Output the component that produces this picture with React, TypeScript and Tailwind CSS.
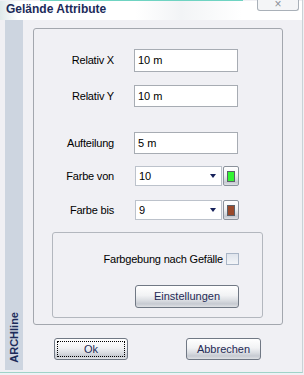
import React from "react";

const BTN_BG =
  "bg-[linear-gradient(to_bottom,#ffffff_0%,#f1f2f4_45%,#d9dce1_70%,#c6cad1_85%,#dfe1e5_100%)]";

function TextField({ value }: { value: string }) {
  return (
    <div className="w-[104px] h-full bg-white border border-[#a7acb3] flex items-center pl-[3px] text-black">
      {value}
    </div>
  );
}

function ColorCombo({ value, color }: { value: string; color: string }) {
  return (
    <div className="flex h-full items-stretch ml-[1px]">
      <div className="w-[87px] bg-white border border-[#bcc2cb] flex items-center justify-between pl-[3px] pr-[5px]">
        <span>{value}</span>
        <svg width="6" height="4" viewBox="0 0 6 4">
          <path d="M0 0h6L3 4z" fill="#16215a" />
        </svg>
      </div>
      <div
        className={`ml-[1px] w-[16px] rounded-[2px] border border-[#8b929c] flex items-center justify-center ${BTN_BG}`}
      >
        <div className="w-[8px] h-[11px] border border-[#5b6068]" style={{ backgroundColor: color }} />
      </div>
    </div>
  );
}

function Row({ label, className, children }: { label: string; className: string; children: React.ReactNode }) {
  return (
    <div className={`flex items-center ${className}`}>
      <div className="w-[80px] text-right tracking-[-0.2px]">{label}</div>
      <div className="ml-[20px] h-full flex">{children}</div>
    </div>
  );
}

function Button({ label, focused, className }: { label: string; focused?: boolean; className?: string }) {
  return (
    <div
      className={`relative h-[22px] rounded-[3px] border border-[#707884] flex items-center justify-center text-[#1f2a55] ${BTN_BG} ${className ?? ""}`}
    >
      {focused && <div className="absolute inset-[2px] border border-dotted border-black" />}
      <span>{label}</span>
    </div>
  );
}

export default function App() {
  return (
    <div className="w-[304px] h-[375px] bg-[#f0f0f4] overflow-hidden text-[11px] text-black font-['Liberation_Sans',Arial,sans-serif]">
      <div className="w-[303px] h-[373px] border-r border-b border-r-[#c9d2d6] border-b-[#9fd3c8] flex flex-col">
        {/* top strip of window behind */}
        <div className="h-[1px] ml-[40px] w-[203px] bg-[#6fd3c2]" />
        {/* title bar */}
        <div className="h-[19px] flex justify-between bg-[linear-gradient(to_right,#dfe9ea_0%,#ffffff_6%,#ffffff_45%,#f2f4f6_60%,#ffffff_80%,#ffffff_100%)]">
          <div className="pl-[6px] pt-[1px] text-[12px] leading-[15px] font-bold text-[#1c2b5a]">Gelände Attribute</div>
          <div className="mr-[3px] -mt-[1px] w-[42px] h-[11px] rounded-b-[3px] border border-t-0 border-[#a9b0b8] bg-[#f4f5f7] flex items-start justify-center overflow-hidden text-[#8a9098] text-[12px] leading-[8px]">
            ×
          </div>
        </div>

        <div className="flex">
          {/* sidebar */}
          <div className="ml-[5px] w-[18px] h-[350px] bg-[#cdd5e0] flex flex-col justify-end items-center pb-[7px]">
            <span className="[writing-mode:vertical-rl] rotate-180 font-bold text-[11px] leading-[11px] text-[#1c2b5a]">
              ARCHline
            </span>
          </div>

          <div className="ml-[10px] flex flex-col pt-[8px]">
            {/* main panel */}
            <div className="w-[250px] h-[297px] border border-[#a3a7ae] rounded-[3px] flex flex-col">
              <Row label="Relativ X" className="mt-[20px] h-[23px]">
                <TextField value="10 m" />
              </Row>
              <Row label="Relativ Y" className="mt-[13px] h-[22px]">
                <TextField value="10 m" />
              </Row>
              <Row label="Aufteilung" className="mt-[25px] h-[22px]">
                <TextField value="5 m" />
              </Row>
              <Row label="Farbe von" className="mt-[12px] h-[20px]">
                <ColorCombo value="10" color="#33f533" />
              </Row>
              <Row label="Farbe bis" className="mt-[14px] h-[20px]">
                <ColorCombo value="9" color="#9a4a2c" />
              </Row>

              {/* group box */}
              <div className="mt-[12px] ml-[18px] w-[211px] h-[86px] border border-[#b3b7be] rounded-[3px] flex flex-col items-end pr-[23px]">
                <div className="mt-[20px] h-[12px] flex items-center">
                  <span className="tracking-[-0.2px]">Farbgebung nach Gefälle</span>
                  <div className="ml-[3px] w-[13px] h-[12px] border border-[#a9b5c6] bg-[linear-gradient(to_bottom,#dfe4ec,#f3f5f8)]" />
                </div>
                <Button label="Einstellungen" className="mt-[20px] w-[104px] h-[23px]" />
              </div>
            </div>

            {/* dialog buttons */}
            <div className="mt-[13px] flex">
              <Button label="Ok" focused className="ml-[21px] w-[74px]" />
              <Button label="Abbrechen" className="ml-[58px] w-[75px]" />
            </div>
          </div>
        </div>
      </div>
    </div>
  );
}
